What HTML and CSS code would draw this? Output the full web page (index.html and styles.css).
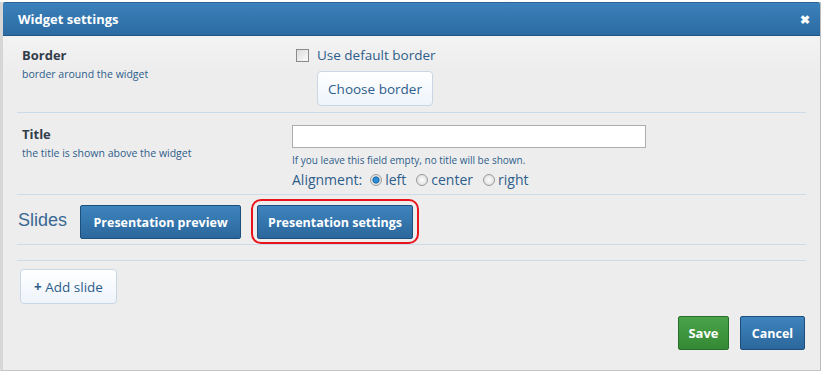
FILE: index.html
```html
<!DOCTYPE html>
<html lang="en">
<head>
    <meta charset="UTF-8">
    <title>Widget settings</title>
    <link rel="stylesheet" href="styles.css">
</head>
<body>

    <div class="dialog">
        <div class="dialog-header">
            <span class="dialog-title">Widget settings</span>
            <span class="dialog-close">&#10006;</span>
        </div>

        <div class="dialog-body">
            <div class="setting-row row-border">
                <div class="setting-label">
                    <div class="setting-name">Border</div>
                    <div class="setting-desc">border around the widget</div>
                </div>
                <div class="setting-control">
                    <label class="check-line">
                        <span class="fake-check"></span>
                        Use default border
                    </label>
                    <button type="button" class="btn-light btn-choose">Choose border</button>
                </div>
            </div>

            <div class="setting-row row-title">
                <div class="setting-label">
                    <div class="setting-name">Title</div>
                    <div class="setting-desc">the title is shown above the widget</div>
                </div>
                <div class="setting-control">
                    <input type="text" class="title-input">
                    <div class="hint">If you leave this field empty, no title will be shown.</div>
                    <div class="align-line">
                        <span class="align-label">Alignment:</span>
                        <span class="radio checked"></span><span class="radio-text">left</span>
                        <span class="radio"></span><span class="radio-text">center</span>
                        <span class="radio"></span><span class="radio-text">right</span>
                    </div>
                </div>
            </div>

            <div class="slides-row">
                <span class="slides-label">Slides</span>
                <button type="button" class="btn-blue btn-preview">Presentation preview</button>
                <span class="highlight">
                    <button type="button" class="btn-blue btn-settings">Presentation settings</button>
                </span>
            </div>

            <!-- slide list, empty for now -->
            <div class="slide-list"></div>

            <button type="button" class="btn-light btn-add"><span class="plus">+</span> Add slide</button>

            <div class="dialog-footer">
                <button type="button" class="btn-green">Save</button>
                <button type="button" class="btn-blue btn-cancel">Cancel</button>
            </div>
        </div>
    </div>

</body>
</html>
```

FILE: styles.css
```css
body {
    margin: 0;
    background-color: #fff;
    font-family: 'Open Sans', sans-serif;
    color: #2d5d8b;
}

.dialog {
    width: 817px;
    height: 368px;
    margin: 2px 0 0 0;
    border-left: 3px solid #d6d6d6;
    border-right: 1px solid #bcbcbc;
    border-bottom: 1px solid #c4c4c4;
    background: linear-gradient(#f8f8f8, #ededed 70px);
}

.dialog-header {
    height: 32px;
    display: flex;
    align-items: center;
    justify-content: space-between;
    padding: 0 10px 0 15px;
    background: linear-gradient(#3b81bb, #2c6ba2);
    border-top: 1px solid #2a6296;
    border-bottom: 1px solid #1f5586;
    border-radius: 2px 2px 0 0;
}

.dialog-title {
    color: #fff;
    font-weight: bold;
    font-size: 13px;
}

.dialog-close {
    color: #fff;
    font-size: 12px;
    font-weight: bold;
}

.dialog-body {
    padding: 0 14px 0 14px;
}

.setting-row {
    display: flex;
    border-bottom: 1px solid #cbdbea;
}

.row-border {
    box-sizing: border-box;
    height: 77px;
    padding-top: 10px;
}

.row-title {
    height: 82px;
    box-sizing: border-box;
    padding-top: 12px;
}

.setting-label {
    width: 270px;
    padding-left: 5px;
}

.setting-name {
    font-weight: bold;
    font-size: 13px;
    color: #333d4a;
    line-height: 18px;
}

.setting-desc {
    font-size: 10.5px;
    color: #2d5d8b;
    margin-top: 3px;
}

.setting-control {
    flex: 1;
}

.check-line {
    display: flex;
    align-items: center;
    font-size: 13.5px;
    margin-left: 4px;
    line-height: 18px;
}

.fake-check {
    width: 11px;
    height: 11px;
    border: 1px solid #8a8a8a;
    background: linear-gradient(135deg, #dcdcdc, #fafafa);
    margin-right: 8px;
}

.btn-light {
    font-family: 'Open Sans', sans-serif;
    background: linear-gradient(#ffffff, #eef4fb);
    border: 1px solid #c9d7e5;
    border-radius: 4px;
    color: #2d5d8b;
    font-size: 13.5px;
    cursor: pointer;
}

.btn-choose {
    margin: 7px 0 0 25px;
    width: 116px;
    height: 35px;
}

.title-input {
    display: block;
    width: 354px;
    height: 23px;
    box-sizing: border-box;
    border: 1px solid #adadad;
    background: #fff;
}

.hint {
    font-size: 10px;
    margin-top: 5px;
}

.align-line {
    display: flex;
    align-items: center;
    font-size: 14px;
    margin-top: 3px;
}

.align-label {
    margin-right: 8px;
}

.radio {
    width: 10px;
    height: 10px;
    border-radius: 50%;
    border: 1px solid #9a9a9a;
    background: radial-gradient(#fdfdfd, #d8d8d8);
    margin-right: 3px;
}

.radio.checked {
    background: radial-gradient(#2b8fd6 30%, #0a5a99 45%, #e8e8e8 55%);
}

.radio-text {
    margin-right: 10px;
}

.slides-row {
    box-sizing: border-box;
    height: 50px;
    padding-top: 4px;
    display: flex;
    align-items: flex-start;
    border-bottom: 1px solid #cbdbea;
}

.slides-label {
    font-family: 'Liberation Sans', sans-serif;
    font-size: 18px;
    color: #3a6894;
    margin: 11px 13px 0 1px;
}

.btn-blue {
    font-family: 'Open Sans', sans-serif;
    font-weight: bold;
    font-size: 12.5px;
    color: #fff;
    height: 34px;
    padding: 0;
    background: linear-gradient(#3e84be, #2b679c);
    border: 1px solid #1d4f7d;
    border-radius: 2px;
    cursor: pointer;
}

.btn-preview {
    width: 161px;
    margin-top: 6px;
}

.btn-settings {
    width: 156px;
}

.highlight {
    margin-left: 10px;
    padding: 4px 4px 3px 4px;
    border: 2px solid #e8141c;
    border-radius: 10px;
    display: flex;
}

.slide-list {
    height: 15px;
    border-bottom: 1px solid #cbdbea;
}

.btn-add {
    margin: 8px 0 0 3px;
    width: 97px;
    height: 35px;
}

.plus {
    font-weight: bold;
}

.dialog-footer {
    display: flex;
    justify-content: flex-end;
    gap: 11px;
    margin-top: 12px;
    padding-right: 1px;
}

.btn-green {
    font-family: 'Open Sans', sans-serif;
    font-weight: bold;
    font-size: 13px;
    color: #fff;
    width: 51px;
    height: 34px;
    background: linear-gradient(#4aa34a, #348a34);
    border: 1px solid #28702a;
    border-radius: 2px;
    cursor: pointer;
}

.btn-cancel {
    width: 65px;
}
```
